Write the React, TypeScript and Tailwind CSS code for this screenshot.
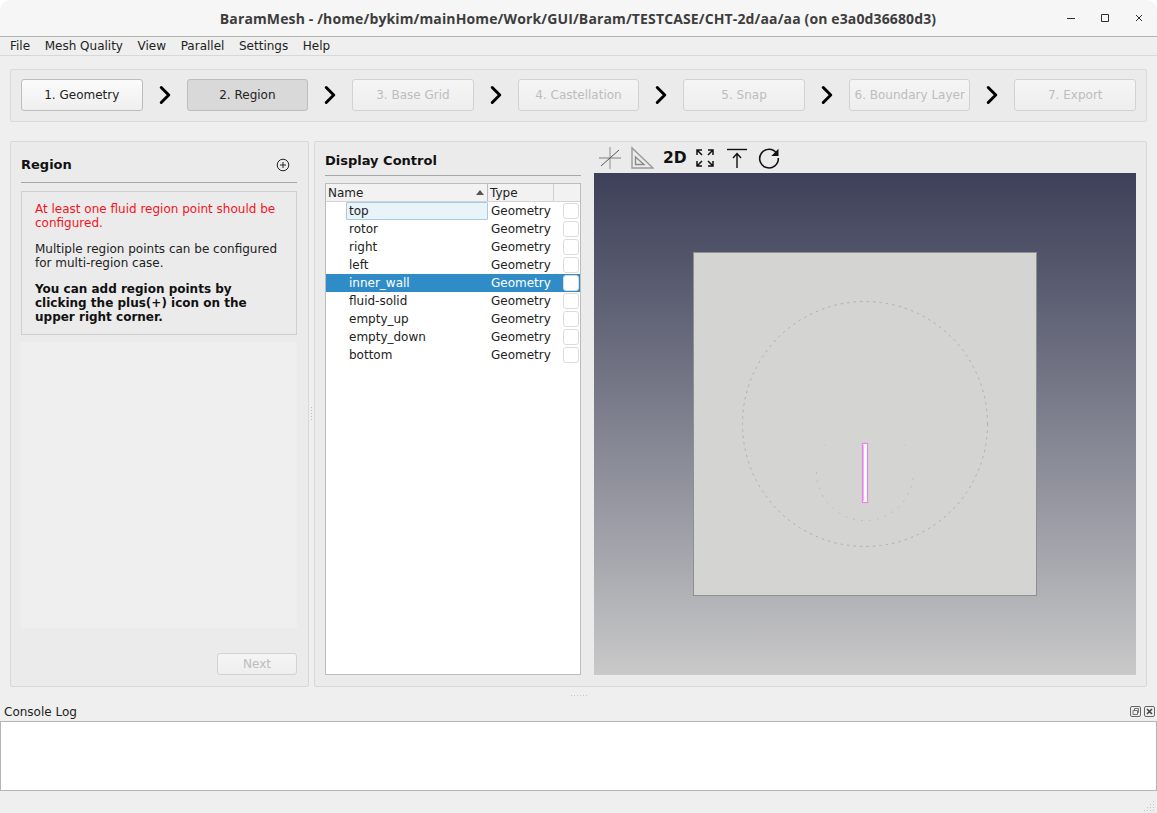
import { ChevronRight } from "lucide-react";

const STEPS = [
  { label: "1. Geometry", state: "normal" },
  { label: "2. Region", state: "active" },
  { label: "3. Base Grid", state: "disabled" },
  { label: "4. Castellation", state: "disabled" },
  { label: "5. Snap", state: "disabled" },
  { label: "6. Boundary Layer", state: "disabled" },
  { label: "7. Export", state: "disabled" },
];

const ROWS = ["top", "rotor", "right", "left", "inner_wall", "fluid-solid", "empty_up", "empty_down", "bottom"];

function TitleBar() {
  return (
    <div className="relative h-[37px] shrink-0 rounded-t-[10px] border-b border-[#b4b4ae] bg-[#f6f6f6]">
      <div className="flex h-[36px] items-center justify-center pr-[1px] font-['Open_Sans',sans-serif] text-[14px] font-bold tracking-[0.13px] text-[#3d3d3d]">
        BaramMesh - /home/bykim/mainHome/Work/GUI/Baram/TESTCASE/CHT-2d/aa/aa (on e3a0d36680d3)
      </div>
      <svg className="absolute left-[1060px] top-[8px]" width="90" height="20" viewBox="0 0 90 20" fill="none" stroke="#2e2e2e">
        <path d="M7 10.5h8" />
        <path d="M41.5 6.5h7v7h-7z" />
        <path d="M76 7l6 6M82 7l-6 6" />
      </svg>
    </div>
  );
}

function MenuBar() {
  return (
    <div className="flex h-[19px] shrink-0 items-center gap-[14.6px] border-b border-[#d8d8d8] pl-[10px] text-[12px] text-[#222]">
      {["File", "Mesh Quality", "View", "Parallel", "Settings", "Help"].map((item) => (
        <span key={item}>{item}</span>
      ))}
    </div>
  );
}

function Stepper() {
  return (
    <div className="flex h-[53px] items-start rounded-[2px] border border-[#dadada] bg-[#ebebeb] px-[10px] pt-[9px]">
      {STEPS.map((step, i) => (
        <div key={step.label} className="contents">
          {i > 0 && (
            <div className="flex h-[32px] w-[44px] shrink-0 items-center justify-center">
              <ChevronRight className="h-[30px] w-[30px] text-black" strokeWidth={2.4} />
            </div>
          )}
          <button
            className={
              step.state === "active"
                ? "h-[32px] min-w-0 flex-1 whitespace-nowrap rounded-[3px] border border-[#bdbdbd] bg-[#d9d9d9] text-[12px] text-[#222]"
                : step.state === "normal"
                  ? "h-[32px] min-w-0 flex-1 whitespace-nowrap rounded-[3px] border border-[#bdbdbd] bg-gradient-to-b from-[#fbfbfb] to-[#efefef] text-[12px] text-[#222]"
                  : "h-[32px] min-w-0 flex-1 whitespace-nowrap rounded-[3px] border border-[#d2d2d2] bg-gradient-to-b from-[#f5f5f5] to-[#eeeeee] text-[12px] text-[#bdbdbd]"
            }
          >
            {step.label}
          </button>
        </div>
      ))}
    </div>
  );
}

function RegionPanel() {
  return (
    <div className="flex w-[299px] shrink-0 flex-col rounded-[2px] border border-[#d8d8d8] bg-[#ebebeb] pb-[11px] pl-[10px] pr-[11px]">
      <div className="flex h-[41px] shrink-0 items-center justify-between border-b border-[#a8a8a8] pt-[5px]">
        <span className="text-[13px] font-bold text-[#111]">Region</span>
        <svg className="mr-[7px]" width="14" height="14" viewBox="0 0 14 14" fill="none" stroke="#222">
          <circle cx="7" cy="7" r="5.8" />
          <path d="M7 4v6M4 7h6" />
        </svg>
      </div>
      <div className="mt-[8px] h-[144px] shrink-0 border border-[#cfcfcf] px-[13px] pt-[10px] text-[12px] leading-[14px] text-[#222]">
        <p className="text-[#f5141e]">At least one fluid region point should be configured.</p>
        <p className="mt-[12px]">Multiple region points can be configured for multi-region case.</p>
        <p className="mt-[12px] font-bold text-[#111]">You can add region points by clicking the plus(+) icon on the upper right corner.</p>
      </div>
      <div className="mt-[7px] min-h-0 flex-1 bg-[#efefef]" />
      <div className="flex justify-end pt-[25px]">
        <button className="h-[22px] w-[80px] rounded-[3px] border border-[#d2d2d2] bg-gradient-to-b from-[#f5f5f5] to-[#eeeeee] text-[12px] text-[#bdbdbd]">
          Next
        </button>
      </div>
    </div>
  );
}

function GeometryTable() {
  return (
    <div className="flex w-[256px] shrink-0 flex-col">
      <div className="flex h-[34px] shrink-0 items-center border-b border-[#a8a8a8] pt-[4px] text-[13px] font-bold text-[#111]">
        Display Control
      </div>
      <div className="mt-[7px] min-h-0 flex-1 border border-[#bcbcbc] bg-white text-[12px] text-[#222]">
        <div className="flex h-[18px] border-b border-[#d4d4d4] bg-[#f2f2f2] leading-[18px]">
          <div className="flex w-[162px] items-center justify-between border-r border-[#bcbcbc] pl-[2px] pr-[3px]">
            <span>Name</span>
            <svg width="8" height="5" viewBox="0 0 8 5">
              <path d="M0 5L4 0l4 5z" fill="#555" />
            </svg>
          </div>
          <div className="w-[66px] border-r border-[#d0d0d0] pl-[2px]">Type</div>
          <div className="flex-1" />
        </div>
        {ROWS.map((row, i) => (
          <div
            key={row}
            className={
              row === "inner_wall"
                ? "flex h-[18px] items-center bg-[#308cc6] text-white"
                : "flex h-[18px] items-center"
            }
          >
            <div className="w-[20px] shrink-0" />
            <div className="w-[142px] shrink-0">
              {i === 0 ? (
                <div className="h-[18px] rounded-[1px] border border-[#a9cbe0] bg-[#e8f3fa] pl-[2px] leading-[16px]">{row}</div>
              ) : (
                <div className="pl-[3px]">{row}</div>
              )}
            </div>
            <div className="w-[75px] shrink-0 pl-[3px]">Geometry</div>
            <div className="h-[16px] w-[16px] shrink-0 rounded-[3px] border border-[#dcdcdc] bg-white" />
          </div>
        ))}
      </div>
    </div>
  );
}

function Toolbar() {
  return (
    <div className="flex h-[31px] shrink-0 items-center pl-[4px]">
      <svg width="24" height="24" viewBox="0 0 24 24" fill="none" stroke="#a4a4a4">
        <path d="M12 1v22M1 12h22" strokeWidth="1.3" />
        <path d="M3 20L21 4" stroke="#555" />
      </svg>
      <svg className="ml-[8px]" width="24" height="24" viewBox="0 0 24 24" fill="none" stroke="#9a9a9a" strokeWidth="1.4">
        <path d="M2 2v20h21z" />
        <path d="M5.5 11v7.5h8.5z" stroke="#8a8a8a" />
      </svg>
      <span className="ml-[9px] mt-[2px] w-[25px] text-[15.5px] font-bold leading-none text-[#111]">2D</span>
      <svg className="ml-[7px]" width="20" height="20" viewBox="0 0 20 20" fill="none" stroke="#111" strokeWidth="1.5">
        <path d="M2 7V2h5M2 2l5 5M13 2h5v5M18 2l-5 5M2 13v5h5M2 18l5-5M18 13v5h-5M18 18l-5-5" />
      </svg>
      <svg className="ml-[11px]" width="22" height="22" viewBox="0 0 22 22" fill="none" stroke="#111" strokeWidth="1.4">
        <path d="M1 2.5h20" />
        <path d="M11 21V7M7 11l4-4.5 4 4.5" />
      </svg>
      <svg className="ml-[9px]" width="24" height="24" viewBox="0 0 24 24" fill="none" stroke="#111" strokeWidth="1.6">
        <path d="M19.6 7.2A9.3 9.3 0 1 0 21.3 12" />
        <path d="M21.5 2.8v7.2h-7.2z" fill="#111" stroke="none" />
      </svg>
    </div>
  );
}

function Viewport() {
  return (
    <div className="min-h-0 flex-1 bg-gradient-to-b from-[#3d4058] to-[#c9c9c9]">
      <svg width="542" height="502" viewBox="594 173 542 502" fill="none">
        <rect x="693.5" y="252.5" width="343" height="343" fill="#d4d4d2" stroke="#8f8f8f" />
        <circle cx="865" cy="424" r="122.5" stroke="#b0b0ae" strokeDasharray="2.5 4" />
        <path d="M816.5 472a48.5 48.5 0 0 0 97 0" stroke="#bdbdbb" strokeDasharray="2 6" />
        <path d="M824.5 445h1M904.5 445h1M837 432h1M892 432h1" stroke="#c0c0be" />
        <rect x="862.5" y="443.5" width="5" height="59" fill="#ffffff" stroke="#e884e8" strokeWidth="1.2" />
        <path d="M863.5 445v56" stroke="#f0b0f0" />
      </svg>
    </div>
  );
}

function DisplayPanel() {
  return (
    <div className="flex min-w-0 flex-1 gap-[13px] rounded-[2px] border border-[#d8d8d8] bg-[#ebebeb] pb-[11px] pl-[10px] pr-[10px]">
      <GeometryTable />
      <div className="flex min-w-0 flex-1 flex-col">
        <Toolbar />
        <Viewport />
      </div>
    </div>
  );
}

function ConsoleLog() {
  return (
    <div className="shrink-0">
      <div className="flex h-[18px] items-start justify-between pl-[4px] pr-[2px]">
        <span className="mt-[2px] text-[12px] leading-[15px] text-[#222]">Console Log</span>
        <svg className="mt-[3px]" width="26" height="11" viewBox="0 0 26 11" fill="none" stroke="#666">
          <rect x="1.5" y="0.5" width="10" height="10" rx="1.5" />
          <path d="M4 4.5h4.5v4H4zM5.5 4.5V2.5H9.5v4H8.5" strokeWidth="0.9" />
          <rect x="15.5" y="0.5" width="10" height="10" rx="1.5" />
          <path d="M18 3l5 5M23 3l-5 5" strokeWidth="1.6" stroke="#444" />
        </svg>
      </div>
      <div className="h-[70px] border border-[#b4b4b4] bg-white" />
    </div>
  );
}

function Splitter() {
  return (
    <div className="flex w-[5px] shrink-0 items-center justify-center">
      <svg width="3" height="16" viewBox="0 0 3 16" fill="#bdbdbd">
        {[1, 4, 7, 10, 13].map((y) => (
          <rect key={y} x="1" y={y} width="1" height="1" />
        ))}
      </svg>
    </div>
  );
}

export default function App() {
  return (
    <div className="flex h-[813px] w-[1157px] flex-col overflow-hidden bg-white font-['DejaVu_Sans',sans-serif]">
      <TitleBar />
      <div className="flex min-h-0 flex-1 flex-col bg-[#efefef]">
        <MenuBar />
        <div className="mt-[13px] shrink-0 px-[10px]">
          <Stepper />
        </div>
        <div className="mt-[19px] flex h-[546px] shrink-0 px-[10px]">
          <RegionPanel />
          <Splitter />
          <DisplayPanel />
        </div>
        <div className="flex h-[16px] shrink-0 items-center justify-center pl-[2px]">
          <svg width="18" height="3" viewBox="0 0 18 3" fill="#c4c4c4">
            {[0, 3, 6, 9, 12, 15].map((x) => (
              <rect key={x} x={x} y="1" width="1" height="1" />
            ))}
          </svg>
        </div>
        <ConsoleLog />
        <div className="relative min-h-0 flex-1">
          <svg className="absolute bottom-[1px] right-[1px]" width="12" height="12" viewBox="0 0 12 12" fill="#c4c4c4">
            <rect x="9" y="1" width="1" height="1" />
            <rect x="6" y="4" width="1" height="1" />
            <rect x="9" y="4" width="1" height="1" />
            <rect x="3" y="7" width="1" height="1" />
            <rect x="6" y="7" width="1" height="1" />
            <rect x="9" y="7" width="1" height="1" />
            <rect x="0" y="10" width="1" height="1" />
            <rect x="3" y="10" width="1" height="1" />
            <rect x="6" y="10" width="1" height="1" />
            <rect x="9" y="10" width="1" height="1" />
          </svg>
        </div>
      </div>
    </div>
  );
}
